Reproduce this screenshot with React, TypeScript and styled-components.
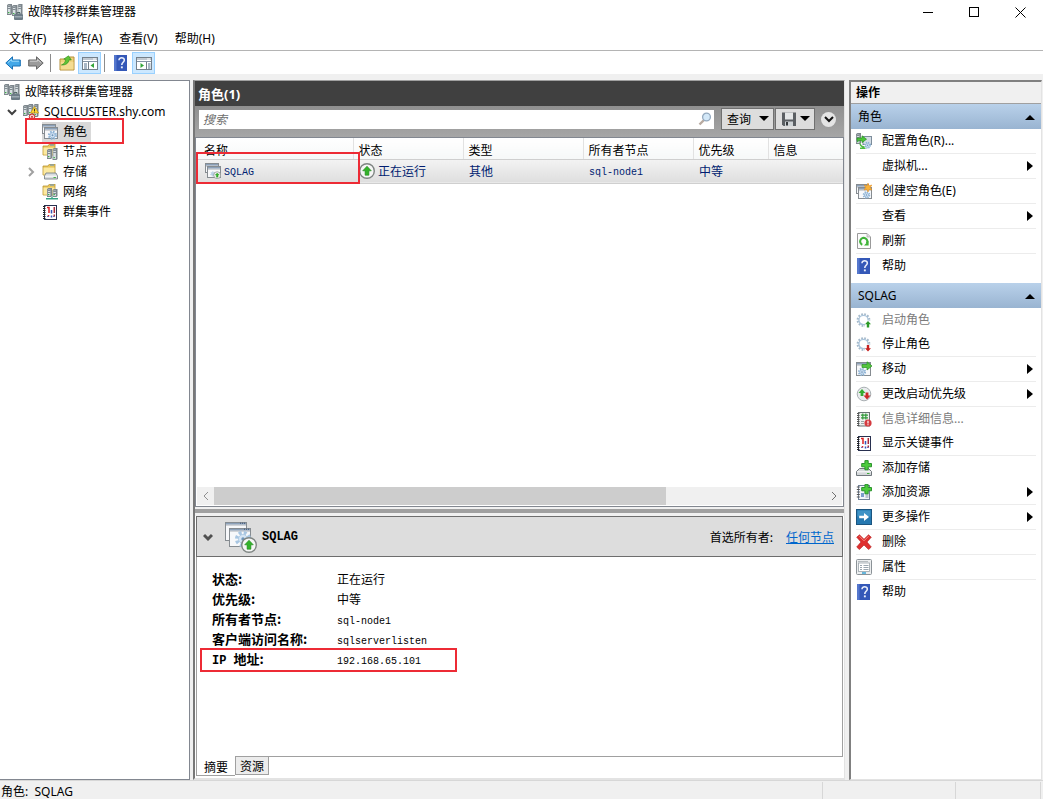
import React from 'react';
import styled, { createGlobalStyle, css } from 'styled-components';

const UI_FONT = '"Noto Sans", "Noto Sans CJK SC", sans-serif';
const CJK_FONT = '"Noto Sans CJK SC", sans-serif';
const MONO_FONT = '"Liberation Mono", "Noto Sans CJK SC", monospace';

const Global = createGlobalStyle`
  *, *::before, *::after { box-sizing: border-box; }
  body { margin: 0; background: #f0f0f0; }
  button, input { font: inherit; color: inherit; }
  button { margin: 0; padding: 0; border: 0; background: none; text-align: left; white-space: nowrap; }
  ul, dl, dd { margin: 0; padding: 0; list-style: none; }
  svg { display: block; flex: none; }
`;

/* ---------- drawings ---------- */

type IconProps = { size?: number; children?: React.ReactNode; box?: number };
const Icon = ({ size = 16, box = 16, children }: IconProps) => (
  <svg width={size} height={size} viewBox={`0 0 ${box} ${box}`} aria-hidden="true">{children}</svg>
);

const Tower = ({ x, y, h = 10 }: { x: number; y: number; h?: number }) => (
  <g transform={`translate(${x} ${y})`}>
    <path d={`M0 1 L1.5 0 H5 V${h - 1} L4 ${h} H0Z`} fill="#7d868c" />
    <rect x=".8" y="1.6" width="2.6" height={h - 2.6} fill="#d9e0e3" />
    <path d="M.8 2.5H3.4M.8 4.5H3.4" stroke="#69747b" strokeWidth=".8" />
    <rect x="1" y={h - 3} width="1.4" height="1.2" fill="#3fae49" />
  </g>
);

const GearShape = ({ x, y, r = 3.2, fill = '#8fb4d6' }: { x: number; y: number; r?: number; fill?: string }) => (
  <g transform={`translate(${x} ${y})`}>
    <circle r={r} fill="none" stroke={fill} strokeWidth={r * 0.7} strokeDasharray={`${r * 0.45} ${r * 0.335}`} />
    <circle r={r * 0.75} fill="#d6e5f3" stroke={fill} strokeWidth=".8" />
    <circle r={r * 0.28} fill="#6d94ba" />
  </g>
);

const WindowShape = ({ x, y, w, h }: { x: number; y: number; w: number; h: number }) => (
  <g>
    <rect x={x + 0.5} y={y + 0.5} width={w - 1} height={h - 1} fill="#f7f8fa" stroke="#868c91" />
    <rect x={x + 1} y={y + 1} width={w - 2} height="1.6" fill="#8ba0b8" />
    <path d={`M${x + 1} ${y + 3.2}H${x + w - 1}`} stroke="#a6adb3" strokeWidth=".7" />
  </g>
);

const ClusterIcon = () => (
  <Icon>
    <Tower x={0} y={0} h={11} /><Tower x={5} y={1} h={11} /><Tower x={10.5} y={0} h={11} />
    <rect x="7" y="10" width="9" height="6" rx="1" fill="#6d7c87" />
    <rect x="7.6" y="12.4" width="7.8" height=".9" fill="#bdc9d1" />
    <path d="M10 10V8.7h3V10" fill="none" stroke="#4d5b65" />
  </Icon>
);

const ClusterAlertIcon = () => (
  <Icon>
    <Tower x={0} y={1} h={11} /><Tower x={5} y={0} h={11} /><Tower x={10.5} y={0} h={13} />
    <path d="M11.4 2.5L15.6 9H7.5Z" fill="#ffd83a" stroke="#b58b00" strokeWidth=".6" />
    <path d="M11.5 4.8V7M11.5 7.6V8.4" stroke="#222" strokeWidth=".9" />
    <circle cx="9" cy="12.8" r="2.8" fill="#f6d9d9" stroke="#cc2c2c" />
    <path d="M8 11.8L10 13.8M10 11.8L8 13.8" stroke="#cc2c2c" />
  </Icon>
);

const RolesIcon = () => (
  <Icon>
    <WindowShape x={0} y={0} w={14} h={10} />
    <WindowShape x={2} y={3} w={14} h={12} />
    <GearShape x={10.5} y={11.3} r={3.4} />
  </Icon>
);

const FolderShape = ({ y = 1 }: { y?: number }) => (
  <g>
    <path d={`M1 ${y + 2}H6L7.5 ${y}H13V${y + 11}H1Z`} fill="#e8c65b" stroke="#b99632" strokeWidth=".8" />
    <path d={`M8 ${y + 1}h4`} stroke="#5b8fd0" />
    <path d={`M1.5 ${y + 3.6}H12.5V${y + 10.6}H1.5Z`} fill="#fbe9a1" />
  </g>
);

const NodesIcon = () => (
  <Icon><FolderShape y={0} /><Tower x={5} y={5} h={10} /><Tower x={10.5} y={4} h={12} /></Icon>
);

const NetworkIcon = () => (
  <Icon>
    <FolderShape y={0} /><Tower x={5} y={4} h={9} /><Tower x={10.5} y={5} h={8} />
    <path d="M4 14.7H16M10 12.8V15.5" stroke="#37a384" strokeWidth="1.4" />
  </Icon>
);

const StorageIcon = () => (
  <Icon>
    <FolderShape y={0} />
    <path d="M4 9H14L15.5 12V15H2.5V12Z" fill="#d8dcdf" stroke="#7c8489" strokeWidth=".9" />
    <path d="M3 12.2H15" stroke="#fff" /><rect x="11.5" y="13" width="2.4" height="1" fill="#45b545" />
  </Icon>
);

const EventsIcon = () => (
  <Icon>
    <rect x="2.5" y="1.5" width="12" height="14" fill="#fff" stroke="#28304f" />
    <path d="M1 2.5h2.5M1 4.5h2.5M1 6.5h2.5M1 8.5h2.5M1 10.5h2.5M1 12.5h2.5M1 14.5h2.5" stroke="#222" />
    <path d="M5 3.5H7V9M6.5 11v1.5" fill="none" stroke="#df2020" strokeWidth="1.5" />
    <path d="M9.5 6V9.5M9.5 11.5v2" stroke="#3555b8" strokeWidth="1.5" />
    <path d="M12.3 3V9M12.3 10.5v2" stroke="#a7283b" strokeWidth="1.5" />
    <path d="M5 12.5h2M11 12.5h2" stroke="#7a6ab0" />
  </Icon>
);

const ToolArrow = ({ back }: { back?: boolean }) => (
  <Icon>
    <path
      transform={back ? undefined : 'translate(16 0) scale(-1 1)'}
      d="M.8 8L7.5 1.8V5H15.3V11H7.5V14.2Z"
      fill={back ? '#43a8e8' : '#9b9b9b'}
      stroke={back ? '#1870b5' : '#666'}
      strokeLinejoin="round"
    />
    <path d={back ? 'M3 7.6L6.6 4.4V6.2H14' : 'M2 6.2H9.5V4.6L13 7.6'} fill="none" stroke={back ? '#9eddfb' : '#cfcfcf'} />
  </Icon>
);

const UpFolderIcon = () => (
  <Icon>
    <path d="M1 4H9L10.5 2H15V15H1Z" fill="#f0d27b" stroke="#b5913c" />
    <path d="M1.8 7H14.4V14.4H1.8Z" fill="#f5dc92" />
    <path d="M2.4 10C5 9 6.4 7 6.6 4.7L4.8 4L9.6 .8L12.3 5L10 4.9C9.6 8 7 10.2 2.4 10Z" fill="#5fc336" stroke="#2f8d1c" strokeWidth=".6" />
  </Icon>
);

const PaneIcon = ({ right }: { right?: boolean }) => (
  <Icon>
    <rect x=".5" y="2.5" width="15" height="12" fill="#fff" stroke="#74808b" />
    <path d="M1 4H15M1 6.5H15" stroke="#8494a5" /><path d="M11 4h3" stroke="#fff" />
    <path d={right ? 'M10.5 7V14' : 'M6.5 7V14'} stroke="#74808b" />
    <path d={right ? 'M12 9h2.5M12 11h2.5M12 13h2.5' : 'M2 9h3M2 11h3M2 13h3'} stroke="#52708e" />
    <path d={right ? 'M4.5 8V13L8 10.5Z' : 'M12 8V13L8.5 10.5Z'} fill="#36a63a" />
  </Icon>
);

const HelpIcon = () => (
  <Icon>
    <rect x="1" y="0" width="13" height="16" fill="#3458b8" />
    <rect x="1" y="0" width="2.5" height="16" fill="#5577cd" />
    <path d="M6 5.3C6 1.8 11.5 2 11.3 5.2C11.2 7.3 8.8 7.4 8.8 10" fill="none" stroke="#e9eefb" strokeWidth="1.6" />
    <rect x="7.9" y="11.4" width="1.9" height="1.9" fill="#e9eefb" />
  </Icon>
);

const UpBadge = ({ x, y, r }: { x: number; y: number; r: number }) => (
  <g transform={`translate(${x} ${y}) scale(${r / 8})`}>
    <circle r="7.3" fill="#f5f6f5" stroke="#7f8583" strokeWidth="1.4" />
    <path d="M0 -4.8L4.3 -.2H1.9V4.2H-1.9V-.2H-4.3Z" fill="#33b32a" stroke="#1d861b" strokeWidth=".6" />
  </g>
);

const RoleRowIcon = () => (
  <Icon>
    <WindowShape x={0} y={0} w={14} h={10} /><WindowShape x={2} y={3} w={14} h={12} />
    <GearShape x={8} y={11} r={2} fill="#b5cde4" /><UpBadge x={12.2} y={12.2} r={3.8} />
  </Icon>
);

const RunningIcon = () => <Icon><UpBadge x={8} y={8} r={8} /></Icon>;

const BigRoleIcon = () => (
  <Icon size={32} box={32}>
    <WindowShape x={0} y={1} w={22} h={19} /><WindowShape x={4} y={7} w={22} h={19} />
    <path d="M15 2.2h5M19 8.2h5" stroke="#394f70" strokeDasharray="1 1" />
    <GearShape x={18} y={18} r={6} fill="#a8c6e2" /><UpBadge x={24} y={24} r={8} />
  </Icon>
);

const ConfigureIcon = () => (
  <Icon>
    <Tower x={0} y={0} h={11} />
    <rect x="7" y="3.5" width="8.5" height="8" fill="#d4dde5" stroke="#7d8d9b" />
    <path d="M1 5H6V2.8L10.5 6.2L6 9.6V7.6H1Z" fill="#4cc437" stroke="#238f20" strokeWidth=".7" />
    <path d="M4 10.5C4.5 13 6 14 8.5 14M4 15.2H9.5" fill="none" stroke="#4dbb40" strokeWidth="1.4" />
    <GearShape x={11.6} y={12.3} r={2.6} />
  </Icon>
);

const NewRoleIcon = () => (
  <Icon>
    <WindowShape x={0} y={1} w={13} h={10} /><WindowShape x={2} y={4} w={14} h={12} />
    <GearShape x={10.5} y={12} r={2.8} />
    <path d="M12 0L13 2.8L15.8 2L14.3 4.5L16 7L13 6.4L12 9L11 6.4L8 7L9.6 4.5L8.2 2L11 2.8Z" fill="#f7b23a" stroke="#e38b1d" strokeWidth=".5" />
  </Icon>
);

const RefreshIcon = () => (
  <Icon>
    <path d="M1.5 .5H11L14.5 4V15.5H1.5Z" fill="#fcfcfc" stroke="#9a9a9a" />
    <path d="M11 .5V4H14.5" fill="#ddd" stroke="#aaa" strokeWidth=".7" />
    <path d="M6.3 11.8A3.6 3.6 0 1 1 10.8 10.4" fill="none" stroke="#3fb338" strokeWidth="2.1" />
    <path d="M12.6 7.8V12.6H8Z" fill="#3fb338" />
  </Icon>
);

const StartStopIcon = ({ stop }: { stop?: boolean }) => (
  <Icon>
    <circle cx="7.5" cy="8" r="5.8" fill="none" stroke="#a5b9ca" strokeWidth="2.2" strokeDasharray="1.7 1.34" />
    <circle cx="7.5" cy="8" r="4.6" fill="#fff" stroke="#a9c3da" strokeWidth="1.3" />
    <rect x="9" y="8.5" width="7" height="7.5" fill="#fff" />
    <path
      transform={stop ? 'translate(0 24.4) scale(1 -1)' : undefined}
      d="M12 9L15 12.2H13.2V15.4H10.8V12.2H9Z" fill={stop ? '#c62020' : '#2d9a28'}
    />
  </Icon>
);

const MoveIcon = () => (
  <Icon>
    <WindowShape x={0} y={1} w={15} h={14} />
    <path d="M6 3.5H11V.8L16 5L11 9V6.5H6Z" fill="#55c63e" stroke="#269022" strokeWidth=".7" />
    <GearShape x={6} y={11} r={3} />
  </Icon>
);

const PriorityIcon = () => (
  <Icon>
    <circle cx="8" cy="8" r="6.8" fill="#e9ecee" stroke="#a9afb3" />
    <path d="M6 3L9.5 7H7.4V10H4.6V7H2.5Z" fill="#36ab30" />
    <path d="M11 13.5L7.5 9.5H9.6V6.5H12.4V9.5H14.5Z" fill="#cc2828" />
  </Icon>
);

const InfoDetailIcon = () => (
  <Icon>
    <rect x="2.5" y="1.5" width="11" height="13.5" fill="#eef0f0" stroke="#6b7574" />
    <path d="M1 2.5h2.5M1 4.5h2.5M1 6.5h2.5M1 8.5h2.5M1 10.5h2.5M1 12.5h2.5M1 14.5h2.5" stroke="#555" />
    <path d="M6.8 2.5V8.5M9.8 2.5V8.5M5 4.2H12M5 6.8H12" stroke="#339b3b" strokeWidth="1.2" />
    <path d="M5 10.5h3M5 12.5h3" stroke="#9aa5a5" />
    <circle cx="12" cy="12" r="3.6" fill="#d43a3f" /><path d="M12 9.8v2.6M12 13.2v1" stroke="#fff" strokeWidth="1.2" />
  </Icon>
);

const PlusShape = () => <path d="M8.9 .6H12.2V3.5H15.5V6.8H12.2V9.8H8.9V6.8H5.7V3.5H8.9Z" fill="#4ccb3c" stroke="#1f8b23" strokeWidth=".9" />;

const AddStorageIcon = () => (
  <Icon>
    <path d="M3.5 8.5H12.5L15.5 11.5V15.5H.5V11.5Z" fill="#d4d8da" stroke="#70777c" />
    <path d="M1 11.8H15" stroke="#fff" /><rect x="11" y="13" width="2.5" height="1" fill="#3cae38" /><PlusShape />
  </Icon>
);

const AddResourceIcon = () => (
  <Icon>
    <rect x="2.5" y="1.5" width="11" height="14" fill="#f4f7fa" stroke="#728298" />
    <path d="M.8 3h3M.8 5.5h3M.8 8h3M.8 10.5h3M.8 13h3" stroke="#555" />
    <rect x="5" y="9" width="3" height="4" fill="#7b9dcb" /><path d="M9.5 11h3M9.5 13h3" stroke="#8292a5" /><PlusShape />
  </Icon>
);

const MoreIcon = () => (
  <Icon>
    <rect x=".5" y=".5" width="15" height="15" fill="#2578b0" stroke="#1b5580" />
    <rect x="1.5" y="1.5" width="13" height="6" fill="#3f93c6" />
    <path d="M3.2 6.7H8V4L13 8L8 12V9.3H3.2Z" fill="#fff" />
  </Icon>
);

const DeleteIcon = () => (
  <Icon>
    <path d="M3.5 .8L8 5.2L12.5 .8L15.3 3.2L11 8L15.3 13L12.6 15.6L8 11L3.4 15.6L.7 13L5 8L.7 3.2Z" fill="#df3030" stroke="#b21c1c" strokeWidth=".6" />
    <path d="M3.4 2.2L8 6.8L12.6 2.2" fill="none" stroke="#f58a83" />
  </Icon>
);

const PropertiesIcon = () => (
  <Icon>
    <rect x=".5" y=".5" width="15" height="15" rx="1" fill="#eceeef" stroke="#8b9297" />
    <rect x="2.5" y="4" width="11" height="8.5" fill="#fff" stroke="#9aa3aa" strokeWidth=".8" />
    <path d="M2 2.5H12" stroke="#b6bcc0" /><path d="M4 6.5h2M7.5 6.5h5M4 8.5h2M7.5 8.5h5M4 10.5h2M7.5 10.5h5" stroke="#909ca6" strokeWidth=".9" />
    <rect x="6" y="13.2" width="4" height="1.6" fill="#44a8d8" />
  </Icon>
);

const SearchIcon = () => (
  <Icon>
    <path d="M7 9L2.5 13.5" stroke="#b8aaa0" strokeWidth="2.4" />
    <circle cx="9.5" cy="6" r="3.9" fill="#d3e8f8" stroke="#94a9be" strokeWidth="1.3" />
  </Icon>
);

const SaveIcon = () => (
  <Icon>
    <path d="M1 1.5H15V15H2.5L1 13.5Z" fill="#5b5f63" />
    <rect x="4" y="1.5" width="8" height="7" fill="#e4e6e7" /><rect x="4" y="10.5" width="8" height="4.5" fill="#cdd2d5" />
    <rect x="5" y="11" width="2" height="3.5" fill="#34383b" />
  </Icon>
);

const Triangle = ({ dir }: { dir: 'up' | 'down' | 'right' }) => (
  <svg width={dir === 'right' ? 6 : 10} height={dir === 'right' ? 10 : 6} aria-hidden="true">
    <path d={dir === 'up' ? 'M0 6H10L5 1Z' : dir === 'down' ? 'M0 0H10L5 5Z' : 'M0 0V10L6 5Z'} fill="#000" />
  </svg>
);

const Chevron = ({ dir, color, width = 1 }: { dir: 'down' | 'left' | 'right'; color: string; width?: number }) => (
  <svg width="10" height="10" aria-hidden="true">
    <path
      d={dir === 'down' ? 'M1 3L5 7L9 3' : dir === 'left' ? 'M7 1L3 5L7 9' : 'M3 1L7 5L3 9'}
      fill="none" stroke={color} strokeWidth={width}
    />
  </svg>
);

/* ---------- window frame ---------- */

const Window = styled.div`
  display: flex;
  flex-direction: column;
  height: 100vh;
  min-height: 640px;
  background: #f0f0f0;
  color: #000;
  font: 12px/20px ${UI_FONT};
`;

const TitleBar = styled.header`
  display: flex;
  align-items: center;
  gap: 5px;
  height: 24px;
  padding-left: 7px;
  background: #fff;
`;

const Title = styled.span`
  flex: 1;
`;

const WindowControl = styled.button`
  display: grid;
  place-items: center;
  width: 46px;
  height: 24px;
`;

const WindowControls = styled.div`
  display: flex;
`;

const MenuBar = styled.nav`
  display: flex;
  gap: 17px;
  height: 27px;
  padding: 5px 9px 0;
  background: #fff;
  border-bottom: 1px solid #b4b4b4;
`;

const MenuItem = styled.button`
  height: 20px;
`;

const ToolBar = styled.div`
  display: flex;
  align-items: center;
  height: 23px;
  padding-left: 1px;
  background: #fff;
`;

const ToolButton = styled.button<{ $active?: boolean }>`
  display: grid;
  place-items: center;
  width: 23px;
  height: 22px;
  ${(p) => p.$active && css`
    background: #cce8ff;
    border: 1px solid #99d1ff;
  `}
`;

const ToolSeparator = styled.span`
  width: 1px;
  height: 18px;
  margin: 0 4px 0 3px;
  background: #8c8c8c;
`;

const Workspace = styled.div`
  flex: 1;
  display: flex;
  min-height: 0;
  padding: 6px 1px 0 0;
`;

/* ---------- tree ---------- */

const TreePane = styled.nav`
  width: 190px;
  padding-top: 1px;
  background: #fff;
  border: 1px solid #828790;
  border-left: 0;
`;

const TreeItem = styled.li<{ $level: number }>`
  position: relative;
  display: flex;
  align-items: center;
  height: 20px;
  padding-left: ${(p) => [4, 7, 26][p.$level]}px;
`;

const Expander = styled.span`
  display: grid;
  place-items: center;
  width: 10px;
  margin-right: 6px;
`;

const TreeLabel = styled.button<{ $selected?: boolean; $wide?: boolean }>`
  display: flex;
  align-items: center;
  gap: ${(p) => (p.$wide ? 5 : 4)}px;
  height: 20px;
  padding-right: 4px;
  background: ${(p) => (p.$selected ? '#d9d9d9' : 'none')};
`;

const Highlight = styled.span<{ $top: number; $left: number; $width: number; $height: number }>`
  position: absolute;
  z-index: 2;
  top: ${(p) => p.$top}px;
  left: ${(p) => p.$left}px;
  width: ${(p) => p.$width}px;
  height: ${(p) => p.$height}px;
  border: 2px solid #ed2b35;
  pointer-events: none;
`;

/* ---------- roles pane ---------- */

const CenterPane = styled.main`
  flex: 1;
  display: flex;
  flex-direction: column;
  min-width: 0;
  margin: 0 4px 0 3px;
  border: 1px solid #a0a0a0;
  border-width: 1px 1px 2px 2px;
  border-color: #a0a0a0 #e3e3e3 #e3e3e3 #787878;
  font-family: ${CJK_FONT};
`;

const PaneHeading = styled.h1`
  height: 25px;
  margin: 0;
  padding: 3px 3px 0;
  background: #404040;
  color: #fff;
  font: bold 13px/20px ${UI_FONT};
`;

const FilterBar = styled.form`
  display: flex;
  align-items: center;
  height: 31px;
  padding: 0 8px 5px 4px;
  background: linear-gradient(#8f8f8f, #a6a6a6);
`;

const SearchBox = styled.label`
  flex: 1;
  display: flex;
  align-items: center;
  height: 19px;
  margin-right: 7px;
  padding-right: 1px;
  background: #fff;
`;

const SearchInput = styled.input`
  flex: 1;
  min-width: 0;
  height: 19px;
  padding: 0 4px;
  border: 0;
  outline: 0;
  background: none;
  &::placeholder { color: #6d6d6d; font-style: italic; opacity: 1; }
`;

const FilterButton = styled.button<{ $width: number }>`
  display: flex;
  align-items: center;
  justify-content: space-between;
  width: ${(p) => p.$width}px;
  height: 22px;
  margin-right: 1px;
  padding: 0 4px 0 5px;
  background: #ddd;
  border: 1px solid #707070;
`;

const RoundButton = styled.button`
  display: grid;
  place-items: center;
  width: 15px;
  height: 15px;
  margin-left: 5px;
  border-radius: 50%;
  background: #e4e4e4;
`;

const ListBox = styled.section`
  flex: 1;
  display: flex;
  flex-direction: column;
  min-height: 120px;
  background: #fff;
  border: 1px solid #828790;
`;

const RolesTable = styled.table`
  width: 100%;
  table-layout: fixed;
  border-collapse: collapse;
`;

const HeadCell = styled.th<{ $first?: boolean }>`
  height: 21px;
  padding: 4px 0 0 ${(p) => (p.$first ? 8 : 5)}px;
  background: linear-gradient(#fff, #f6f8f8);
  border-right: 1px solid #e2e2e2;
  border-bottom: 1px solid #cfcfcf;
  font-weight: normal;
  line-height: 16px;
  text-align: left;
  &:last-child { border-right: 0; }
`;

const Cell = styled.td<{ $pad: number }>`
  position: relative;
  height: 21px;
  padding: 0 0 0 ${(p) => p.$pad}px;
  background: linear-gradient(#f3f3f3, #dedede);
  border-bottom: 1px solid #cfcfcf;
  color: #001d70;
`;

const CellContent = styled.span`
  display: flex;
  align-items: center;
  gap: 3px;
`;

const Latin = styled.span`
  font-family: ${MONO_FONT};
  font-size: 10px;
`;

const ScrollBar = styled.div`
  display: flex;
  height: 18px;
  margin: auto 1px 1px;
  background: #f0f0f0;
`;

const ScrollButton = styled.button`
  display: grid;
  place-items: center;
  width: 17px;
`;

const ScrollTrack = styled.div`
  flex: 1;
`;

const ScrollThumb = styled.div`
  width: 74%;
  height: 100%;
  background: #cdcdcd;
`;

const Splitter = styled.div`
  height: 9px;
  border: solid #f0f0f0;
  border-width: 2px 0 3px;
  background: #a0a0a0;
`;

const Details = styled.section`
  display: flex;
  flex-direction: column;
  padding: 0 1px;
  background: #fff;
`;

const DetailsHeader = styled.header`
  display: flex;
  align-items: center;
  height: 41px;
  padding: 0 8px 0 6px;
  background: #ddd;
  border: 1px solid #6d6d6d;
`;

const CollapseButton = styled.button`
  margin-right: 12px;
`;

const RoleName = styled.h2`
  flex: 1;
  margin: 0 0 0 5px;
  font-family: ${MONO_FONT};
  font-size: 12px;
`;

const OwnerLabel = styled.span`
  margin-right: 13px;
`;

const OwnerLink = styled.a`
  color: #0066cc;
`;

const DetailsBody = styled.div`
  height: 200px;
  padding: 12px 15px;
  border: solid #a0a0a0;
  border-width: 0 1px 1px;
`;

const Property = styled.div`
  position: relative;
  display: flex;
  height: 20px;
`;

const PropertyName = styled.dt`
  width: 125px;
  font-size: 13px;
  font-weight: bold;
`;

const PropertyPrefix = styled.span`
  font-family: ${MONO_FONT};
  font-size: 12px;
`;

const TabStrip = styled.div`
  display: flex;
  align-items: flex-start;
  height: 21px;
`;

const Tab = styled.button<{ $active?: boolean }>`
  height: ${(p) => (p.$active ? 20 : 19)}px;
  margin-top: -1px;
  padding: 0 ${(p) => (p.$active ? 7 : 4)}px;
  background: ${(p) => (p.$active ? '#fff' : '#ececec')};
  border: 1px solid #a0a0a0;
  border-width: ${(p) => (p.$active ? '0 0 1px 1px' : '1px')};
  line-height: ${(p) => (p.$active ? 22 : 18)}px;
`;

/* ---------- actions pane ---------- */

const ActionsPane = styled.aside`
  width: 193px;
  background: #fff;
  border: solid;
  border-width: 2px 1px 1px 2px;
  border-color: #808080 #e3e3e3 #e3e3e3 #808080;
`;

const ActionsTitle = styled.h2`
  height: 22px;
  margin: 0;
  padding-left: 5px;
  background: #f0f0f0;
  border-bottom: 1px solid #a0a0a0;
  font-size: 12px;
  line-height: 21px;
`;

const GroupHeader = styled.button`
  display: flex;
  align-items: center;
  justify-content: space-between;
  width: 100%;
  height: 25px;
  padding: 0 6px 0 7px;
  background: linear-gradient(#b9d1ea, #99b4d1);
`;

const ActionGroup = styled.ul`
  margin-bottom: 5px;
`;

const ActionItem = styled.li<{ $divided: boolean }>`
  margin: 0 5px;
  border-bottom: ${(p) => (p.$divided ? 1 : 0)}px solid #ececec;
`;

const ActionButton = styled.button`
  display: flex;
  align-items: center;
  width: 100%;
  height: 24px;
  padding: 0 3px 0 0;
  &:disabled { color: #7c7c7c; }
`;

const ActionIcon = styled.span`
  width: 26px;
  height: 16px;
`;

const ActionText = styled.span`
  flex: 1;
`;

/* ---------- status bar ---------- */

const StatusBar = styled.footer`
  display: flex;
  height: 19px;
  padding-right: 2px;
  border-top: 1px solid #d7d7d7;
  line-height: 21px;
`;

const StatusText = styled.span`
  flex: 1;
  padding-left: 1px;
  white-space: pre;
`;

const StatusSlot = styled.span<{ $width: number }>`
  width: ${(p) => p.$width}px;
  margin-top: 1px;
  border-left: 1px solid #d7d7d7;
  &:last-child { border-right: 1px solid #d7d7d7; }
`;

/* ---------- content ---------- */

type Action = { label: string; icon?: React.ReactNode; more?: boolean; divided?: boolean; disabled?: boolean };

const roleActions: Action[] = [
  { label: '配置角色(R)...', icon: <ConfigureIcon />, divided: true },
  { label: '虚拟机...', more: true, divided: true },
  { label: '创建空角色(E)', icon: <NewRoleIcon />, divided: true },
  { label: '查看', more: true, divided: true },
  { label: '刷新', icon: <RefreshIcon />, divided: true },
  { label: '帮助', icon: <HelpIcon /> },
];

const itemActions: Action[] = [
  { label: '启动角色', icon: <StartStopIcon />, disabled: true },
  { label: '停止角色', icon: <StartStopIcon stop />, divided: true },
  { label: '移动', icon: <MoveIcon />, more: true, divided: true },
  { label: '更改启动优先级', icon: <PriorityIcon />, more: true, divided: true },
  { label: '信息详细信息...', icon: <InfoDetailIcon />, disabled: true },
  { label: '显示关键事件', icon: <EventsIcon />, divided: true },
  { label: '添加存储', icon: <AddStorageIcon /> },
  { label: '添加资源', icon: <AddResourceIcon />, more: true, divided: true },
  { label: '更多操作', icon: <MoreIcon />, more: true, divided: true },
  { label: '删除', icon: <DeleteIcon />, divided: true },
  { label: '属性', icon: <PropertiesIcon />, divided: true },
  { label: '帮助', icon: <HelpIcon /> },
];

const Actions = ({ title, items }: { title: string; items: Action[] }) => (
  <>
    <GroupHeader type="button">{title}<Triangle dir="up" /></GroupHeader>
    <ActionGroup>
      {items.map((a) => (
        <ActionItem key={a.label} $divided={!!a.divided}>
          <ActionButton type="button" disabled={a.disabled}>
            <ActionIcon>{a.icon}</ActionIcon>
            <ActionText>{a.label}</ActionText>
            {a.more && <Triangle dir="right" />}
          </ActionButton>
        </ActionItem>
      ))}
    </ActionGroup>
  </>
);

const treeChildren = [
  { label: '角色', icon: <RolesIcon />, selected: true },
  { label: '节点', icon: <NodesIcon /> },
  { label: '存储', icon: <StorageIcon />, closed: true },
  { label: '网络', icon: <NetworkIcon /> },
  { label: '群集事件', icon: <EventsIcon /> },
];

const properties = [
  { name: '状态:', value: '正在运行' },
  { name: '优先级:', value: '中等' },
  { name: '所有者节点:', value: <Latin>sql-node1</Latin> },
  { name: '客户端访问名称:', value: <Latin>sqlserverlisten</Latin> },
  { prefix: 'IP ', name: '地址:', value: <Latin>192.168.65.101</Latin>, marked: true },
];

export default function App() {
  return (
    <Window>
      <Global />
      <TitleBar>
        <ClusterIcon />
        <Title>故障转移群集管理器</Title>
        <WindowControls>
          <WindowControl aria-label="最小化"><svg width="11" height="11"><path d="M0 5.5H10" stroke="#000" /></svg></WindowControl>
          <WindowControl aria-label="最大化"><svg width="11" height="11"><rect x=".5" y=".5" width="9" height="9" fill="none" stroke="#000" /></svg></WindowControl>
          <WindowControl aria-label="关闭"><svg width="11" height="11"><path d="M.5 .5L10.5 10.5M10.5 .5L.5 10.5" stroke="#000" /></svg></WindowControl>
        </WindowControls>
      </TitleBar>
      <MenuBar>
        {['文件(F)', '操作(A)', '查看(V)', '帮助(H)'].map((m) => <MenuItem key={m} type="button">{m}</MenuItem>)}
      </MenuBar>
      <ToolBar>
        <ToolButton aria-label="后退"><ToolArrow back /></ToolButton>
        <ToolButton aria-label="前进"><ToolArrow /></ToolButton>
        <ToolSeparator />
        <ToolButton aria-label="向上"><UpFolderIcon /></ToolButton>
        <ToolButton aria-label="控制台树" $active><PaneIcon /></ToolButton>
        <ToolSeparator />
        <ToolButton aria-label="帮助"><HelpIcon /></ToolButton>
        <ToolButton aria-label="操作窗格" $active><PaneIcon right /></ToolButton>
      </ToolBar>

      <Workspace>
        <TreePane>
          <ul>
            <TreeItem $level={0}><TreeLabel type="button" $wide><ClusterIcon />故障转移群集管理器</TreeLabel></TreeItem>
            <TreeItem $level={1}>
              <Expander><Chevron dir="down" color="#404040" width={2} /></Expander>
              <TreeLabel type="button" $wide><ClusterAlertIcon />SQLCLUSTER.shy.com</TreeLabel>
            </TreeItem>
            {treeChildren.map((t) => (
              <TreeItem key={t.label} $level={2}>
                <Expander>{t.closed && <Chevron dir="right" color="#a0a0a0" width={2} />}</Expander>
                <TreeLabel type="button" $wide $selected={t.selected}>{t.icon}{t.label}</TreeLabel>
                {t.selected && <Highlight $top={-4} $left={25} $width={99} $height={26} />}
              </TreeItem>
            ))}
          </ul>
        </TreePane>

        <CenterPane>
          <PaneHeading>角色(1)</PaneHeading>
          <FilterBar>
            <SearchBox>
              <SearchInput type="text" placeholder="搜索" aria-label="搜索" />
              <SearchIcon />
            </SearchBox>
            <FilterButton type="button" $width={53}>查询<Triangle dir="down" /></FilterButton>
            <FilterButton type="button" $width={40} aria-label="保存查询"><SaveIcon /><Triangle dir="down" /></FilterButton>
            <RoundButton type="button" aria-label="展开"><Chevron dir="down" color="#111" width={2} /></RoundButton>
          </FilterBar>

          <ListBox>
            <RolesTable>
              <colgroup>
                <col width="157" /><col width="110" /><col width="120" /><col width="110" /><col width="75" /><col />
              </colgroup>
              <thead>
                <tr>
                  <HeadCell $first>名称</HeadCell>
                  <HeadCell>状态</HeadCell>
                  <HeadCell>类型</HeadCell>
                  <HeadCell>所有者节点</HeadCell>
                  <HeadCell>优先级</HeadCell>
                  <HeadCell>信息</HeadCell>
                </tr>
              </thead>
              <tbody>
                <tr>
                  <Cell $pad={9}>
                    <CellContent><RoleRowIcon /><span><Latin>SQLAG</Latin></span></CellContent>
                    <Highlight $top={-8} $left={0} $width={164} $height={32} />
                  </Cell>
                  <Cell $pad={6}><CellContent><RunningIcon />正在运行</CellContent></Cell>
                  <Cell $pad={6}>其他</Cell>
                  <Cell $pad={6}><Latin>sql-node1</Latin></Cell>
                  <Cell $pad={6}>中等</Cell>
                  <Cell $pad={6} />
                </tr>
              </tbody>
            </RolesTable>
            <ScrollBar>
              <ScrollButton type="button" aria-label="向左滚动"><Chevron dir="left" color="#909090" /></ScrollButton>
              <ScrollTrack><ScrollThumb /></ScrollTrack>
              <ScrollButton type="button" aria-label="向右滚动"><Chevron dir="right" color="#707070" /></ScrollButton>
            </ScrollBar>
          </ListBox>

          <Splitter />

          <Details>
            <DetailsHeader>
              <CollapseButton type="button" aria-label="折叠"><Chevron dir="down" color="#505050" width={3} /></CollapseButton>
              <BigRoleIcon />
              <RoleName>SQLAG</RoleName>
              <OwnerLabel>首选所有者:</OwnerLabel>
              <OwnerLink href="#owners">任何节点</OwnerLink>
            </DetailsHeader>
            <DetailsBody>
              <dl>
                {properties.map((p) => (
                  <Property key={p.name}>
                    <PropertyName>{p.prefix && <PropertyPrefix>{p.prefix}</PropertyPrefix>}{p.name}</PropertyName>
                    <dd>{p.value}</dd>
                    {p.marked && <Highlight $top={-1} $left={-12} $width={257} $height={24} />}
                  </Property>
                ))}
              </dl>
            </DetailsBody>
            <TabStrip>
              <Tab type="button" $active>摘要</Tab>
              <Tab type="button">资源</Tab>
            </TabStrip>
          </Details>
        </CenterPane>

        <ActionsPane>
          <ActionsTitle>操作</ActionsTitle>
          <Actions title="角色" items={roleActions} />
          <Actions title="SQLAG" items={itemActions} />
        </ActionsPane>
      </Workspace>

      <StatusBar>
        <StatusText>{'角色:  SQLAG'}</StatusText>
        <StatusSlot $width={133} />
        <StatusSlot $width={86} />
      </StatusBar>
    </Window>
  );
}
